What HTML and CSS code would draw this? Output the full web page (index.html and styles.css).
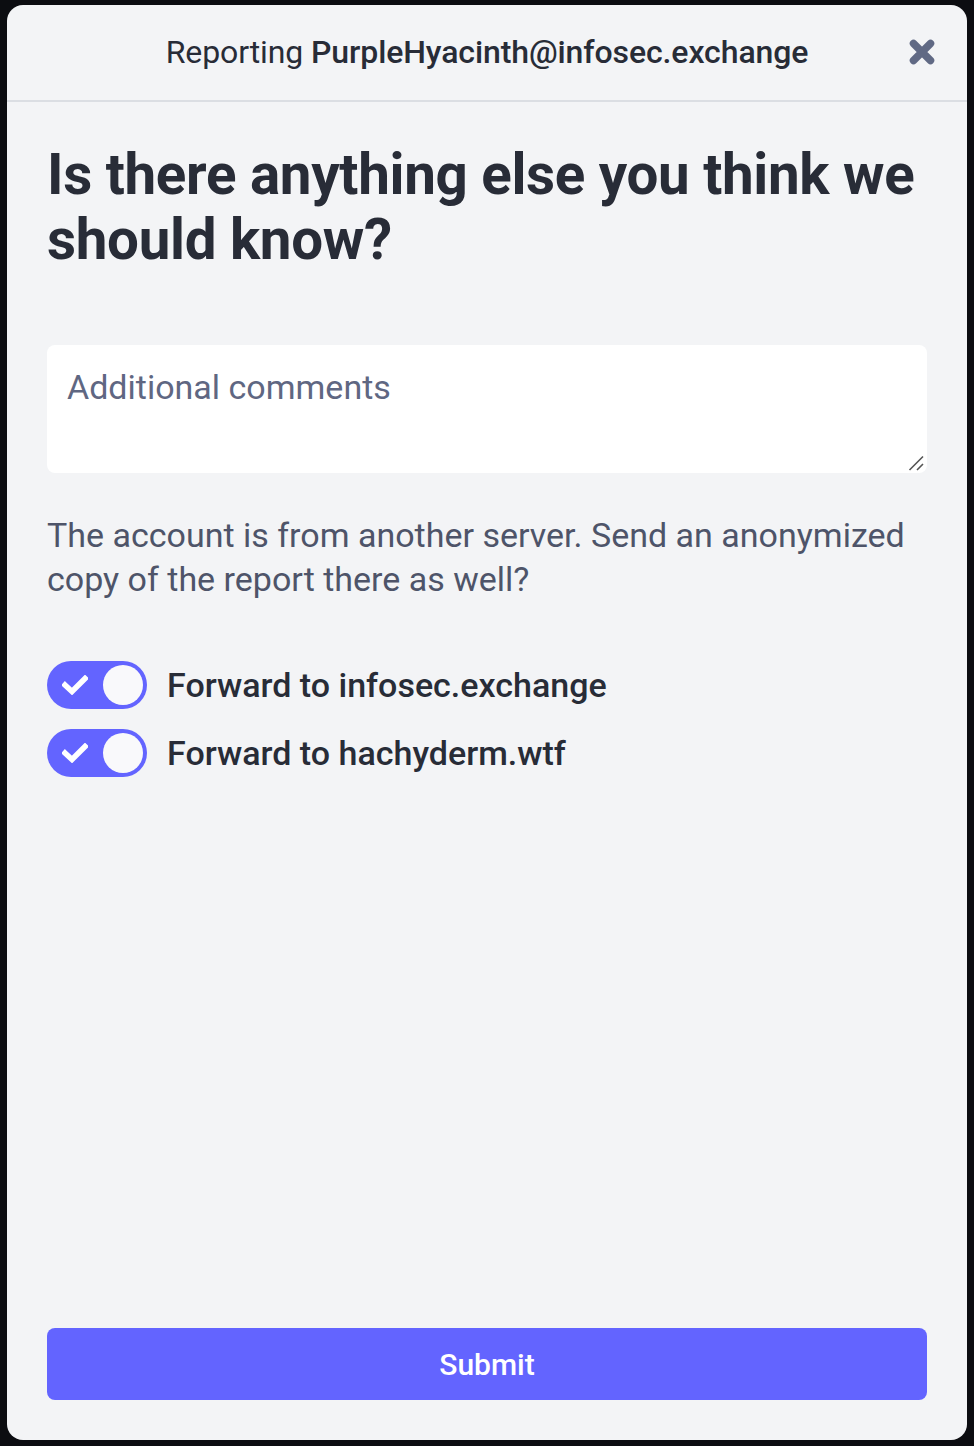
FILE: index.html
```html
<!DOCTYPE html>
<html lang="en">
<head>
<meta charset="utf-8">
<title>Report</title>
<link rel="stylesheet" href="styles.css">
</head>
<body>
<div class="backdrop">
  <div class="modal">
    <div class="modal-header">
      <div class="modal-target">Reporting <strong>PurpleHyacinth@infosec.exchange</strong></div>
      <button class="close-btn" aria-label="Close">
        <svg viewBox="0 0 26 26" width="26" height="26"><path d="M4.5 4.5 L21.5 21.5 M21.5 4.5 L4.5 21.5" stroke="#606984" stroke-width="7.5" stroke-linecap="round" fill="none"/></svg>
      </button>
    </div>
    <div class="modal-body">
      <h3 class="title">Is there anything else you think we should know?</h3>
      <div class="comments-wrap">
        <textarea class="comments" placeholder="Additional comments"></textarea>
        <svg class="grip" viewBox="0 0 16 16" width="16" height="16"><path d="M1.5 15 L15 1.5 M9 15 L15 9" stroke="#555" stroke-width="1.6" fill="none"/></svg>
      </div>
      <p class="lead">The account is from another server. Send an anonymized copy of the report there as well?</p>
      <div class="toggles">
        <label class="toggle-row">
          <span class="toggle">
            <svg class="check" viewBox="0 0 26 20" width="26" height="20"><path d="M3 10 L10 16.5 L23 3.5" stroke="#fff" stroke-width="5.5" fill="none" stroke-linecap="square"/></svg>
            <span class="thumb"></span>
          </span>
          <span class="toggle-label">Forward to infosec.exchange</span>
        </label>
        <label class="toggle-row">
          <span class="toggle">
            <svg class="check" viewBox="0 0 26 20" width="26" height="20"><path d="M3 10 L10 16.5 L23 3.5" stroke="#fff" stroke-width="5.5" fill="none" stroke-linecap="square"/></svg>
            <span class="thumb"></span>
          </span>
          <span class="toggle-label">Forward to hachyderm.wtf</span>
        </label>
      </div>
      <div class="spacer"></div>
      <button class="submit">Submit</button>
    </div>
  </div>
</div>
</body>
</html>
```

FILE: styles.css
```css
* { box-sizing: border-box; }
html, body { margin: 0; padding: 0; }
body {
  background: #0c0d11;
  font-family: Roboto, "Liberation Sans", sans-serif;
  width: 974px;
  height: 1446px;
  overflow: hidden;
}
.backdrop {
  padding: 5px 7px 6px 7px;
  height: 1446px;
  display: flex;
}
.modal {
  flex: 1;
  background: #f3f4f6;
  border-radius: 16px;
  display: flex;
  flex-direction: column;
  overflow: hidden;
}
.modal-header {
  height: 97px;
  border-bottom: 2px solid #dbdee3;
  display: flex;
  align-items: center;
  justify-content: center;
  position: relative;
}
.modal-target {
  font-size: 32px;
  color: #282c37;
  letter-spacing: -0.1px;
  padding-bottom: 2px;
}
.modal-target strong { font-weight: 500; }
.close-btn {
  position: absolute;
  right: 32px;
  top: 34px;
  width: 26px;
  height: 26px;
  padding: 0;
  border: 0;
  background: none;
  display: flex;
}
.modal-body {
  flex: 1;
  display: flex;
  flex-direction: column;
  padding: 41px 40px 40px 40px;
}
.title {
  margin: 0;
  font-size: 56.5px;
  line-height: 65px;
  font-weight: 700;
  color: #282c37;
  letter-spacing: -0.3px;
}
.comments-wrap {
  margin-top: 72px;
  position: relative;
  height: 128px;
}
.comments {
  display: block;
  height: 128px;
  width: 100%;
  border: 0;
  border-radius: 8px;
  background: #fff;
  padding: 20px 20px;
  font-family: Roboto, "Liberation Sans", sans-serif;
  font-size: 34px;
  line-height: 44px;
  color: #282c37;
  resize: none;
  outline: none;
}
.comments::placeholder { color: #5f6782; opacity: 1; }
.grip {
  position: absolute;
  right: 3px;
  bottom: 2px;
  pointer-events: none;
}
.lead {
  margin: 40px 0 0 0;
  font-size: 34px;
  line-height: 44px;
  color: #4e5469;
}
.toggles {
  margin-top: 60px;
  display: flex;
  flex-direction: column;
  gap: 20px;
}
.toggle-row {
  display: flex;
  align-items: center;
  gap: 20px;
  height: 48px;
}
.toggle {
  width: 100px;
  height: 48px;
  border-radius: 24px;
  background: #6364ff;
  position: relative;
  flex: none;
}
.check {
  position: absolute;
  left: 15px;
  top: 14px;
}
.thumb {
  position: absolute;
  left: 56px;
  top: 4px;
  width: 40px;
  height: 40px;
  border-radius: 50%;
  background: #f9f9fb;
}
.toggle-label {
  font-size: 34px;
  font-weight: 500;
  color: #282c37;
  line-height: 44px;
}
.spacer { flex: 1; }
.submit {
  height: 72px;
  width: 100%;
  border: 0;
  border-radius: 8px;
  background: #6364ff;
  color: #fff;
  font-family: Roboto, "Liberation Sans", sans-serif;
  font-size: 30px;
  font-weight: 500;
  padding: 0;
}
```
